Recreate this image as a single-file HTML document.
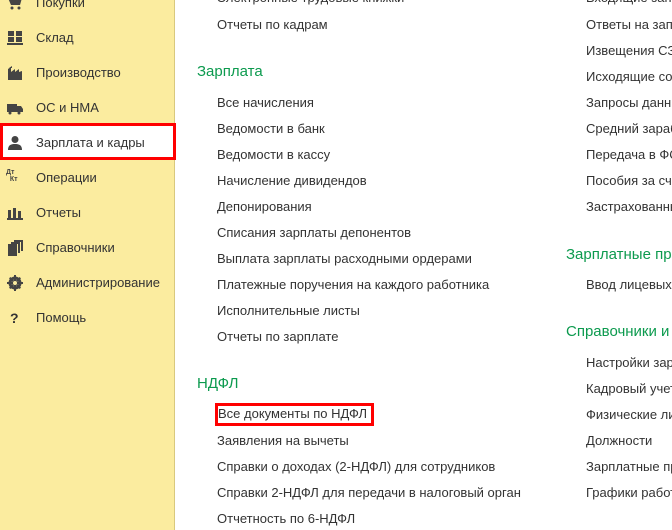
<!DOCTYPE html>
<html><head><meta charset="utf-8"><style>
html,body{margin:0;width:672px;height:530px;overflow:hidden}
body{background:#fff;font-family:"Liberation Sans",Arial,sans-serif;position:relative;color:#333}
.wrap{position:absolute;left:0;top:0;width:672px;height:530px;overflow:hidden}
.in{position:absolute;left:0;top:1px;width:672px;height:530px}
.sb{position:absolute;left:0;top:0;width:174px;height:530px;background:#FBEC9F;border-right:1px solid #D9C97E}
.it{position:absolute;left:36px;font-size:13px;color:#333;line-height:16px}
.ic{position:absolute;left:7px;width:16px;height:16px}
.l{position:absolute;font-size:13px;line-height:16px;color:#333;white-space:nowrap}
.h{position:absolute;font-size:15px;line-height:18px;color:#0C9A4E;white-space:nowrap}
.red{position:absolute;border:3px solid #f00;box-sizing:border-box}
</style></head><body><div class="wrap">
<div class="sb"></div>
<div class="in">
<svg class="ic" style="top:-6px" viewBox="0 0 16 16"><path d="M1 3h14l-2 7H4z" fill="#444"/><circle cx="5" cy="13" r="1.5" fill="#444"/><circle cx="12" cy="13" r="1.5" fill="#444"/></svg>
<div class="it" style="top:-6px">Покупки</div>
<svg class="ic" style="top:29px" viewBox="0 0 16 16"><path d="M1 1h6v5H1zM9 1h6v5H9zM1 7h6v5H1zM9 7h6v5H9zM0 13h16v2H0z" fill="#444"/></svg>
<div class="it" style="top:29px">Склад</div>
<svg class="ic" style="top:64px" viewBox="0 0 16 16"><path d="M1 15V4l3-2v5l4-3v3l4-3v3l3-1v9z M2 3l3-2v2z" fill="#444"/></svg>
<div class="it" style="top:64px">Производство</div>
<svg class="ic" style="top:99px" viewBox="0 0 16 16"><path d="M0 4h10v8H0zM10 6h4l2 3v3h-6z" fill="#444"/><circle cx="3" cy="13" r="1.5" fill="#444"/><circle cx="12" cy="13" r="1.5" fill="#444"/></svg>
<div class="it" style="top:99px">ОС и НМА</div>
<div style="position:absolute;left:0;top:122px;width:176px;height:37px;background:#fff"></div>
<div class="red" style="left:0;top:122px;width:176px;height:37px"></div>
<svg class="ic" style="top:134px" viewBox="0 0 16 16"><circle cx="8" cy="4.5" r="3.5" fill="#444"/><path d="M1 15c0-5 3-6 7-6s7 1 7 6z" fill="#444"/></svg>
<div class="it" style="top:134px">Зарплата и кадры</div>
<div style="position:absolute;left:6px;top:168px;font-size:7px;font-weight:bold;color:#444;line-height:7px">Дт<br>&nbsp;&nbsp;Кт</div>
<div class="it" style="top:169px">Операции</div>
<svg class="ic" style="top:204px" viewBox="0 0 16 16"><path d="M1 5h3v8H1zM6 3h3v10H6zM11 6h3v7h-3zM0 13h16v2H0z" fill="#444"/></svg>
<div class="it" style="top:204px">Отчеты</div>
<svg class="ic" style="top:239px" viewBox="0 0 16 16"><path d="M1 4h9v12H1zM4 2h9v11h-2V4H4zM7 0h9v11h-2V2H7z" fill="#444"/></svg>
<div class="it" style="top:239px">Справочники</div>
<svg class="ic" style="top:274px" viewBox="0 0 16 16"><circle cx="8" cy="8" r="5" fill="none" stroke="#444" stroke-width="3"/><path d="M7 0h2v16H7zM0 7h16v2H0z" fill="#444"/><path d="M2 3.4L3.4 2 14 12.6 12.6 14zM12.6 2L14 3.4 3.4 14 2 12.6z" fill="#444"/><circle cx="8" cy="8" r="2" fill="#FBEC9F"/></svg>
<div class="it" style="top:274px">Администрирование</div>
<div style="position:absolute;left:10px;top:309px;font-size:14px;font-weight:bold;color:#333">?</div>
<div class="it" style="top:309px">Помощь</div>

<div class="l" style="left:217px;top:-11px">Электронные трудовые книжки</div>
<div class="l" style="left:217px;top:16px">Отчеты по кадрам</div>
<div class="h" style="left:197px;top:62px">Зарплата</div>
<div class="l" style="left:217px;top:94px">Все начисления</div>
<div class="l" style="left:217px;top:120px">Ведомости в банк</div>
<div class="l" style="left:217px;top:146px">Ведомости в кассу</div>
<div class="l" style="left:217px;top:172px">Начисление дивидендов</div>
<div class="l" style="left:217px;top:198px">Депонирования</div>
<div class="l" style="left:217px;top:224px">Списания зарплаты депонентов</div>
<div class="l" style="left:217px;top:250px">Выплата зарплаты расходными ордерами</div>
<div class="l" style="left:217px;top:276px">Платежные поручения на каждого работника</div>
<div class="l" style="left:217px;top:302px">Исполнительные листы</div>
<div class="l" style="left:217px;top:328px">Отчеты по зарплате</div>
<div class="h" style="left:197px;top:374px">НДФЛ</div>
<div class="red" style="left:215px;top:402px;width:159px;height:23px"></div>
<div class="l" style="left:218px;top:405px">Все документы по НДФЛ</div>
<div class="l" style="left:217px;top:432px">Заявления на вычеты</div>
<div class="l" style="left:217px;top:458px">Справки о доходах (2-НДФЛ) для сотрудников</div>
<div class="l" style="left:217px;top:484px">Справки 2-НДФЛ для передачи в налоговый орган</div>
<div class="l" style="left:217px;top:510px">Отчетность по 6-НДФЛ</div>

<div class="l" style="left:586px;top:-11px">Входящие запросы</div>
<div class="l" style="left:586px;top:16px">Ответы на запросы</div>
<div class="l" style="left:586px;top:42px">Извещения СЗВ</div>
<div class="l" style="left:586px;top:68px">Исходящие сообщения</div>
<div class="l" style="left:586px;top:94px">Запросы данных</div>
<div class="l" style="left:586px;top:120px">Средний заработок</div>
<div class="l" style="left:586px;top:146px">Передача в ФСС</div>
<div class="l" style="left:586px;top:172px">Пособия за счет</div>
<div class="l" style="left:586px;top:198px">Застрахованные</div>
<div class="h" style="left:566px;top:245px">Зарплатные проекты</div>
<div class="l" style="left:586px;top:276px">Ввод лицевых счетов</div>
<div class="h" style="left:566px;top:322px">Справочники и настройки</div>
<div class="l" style="left:586px;top:354px">Настройки зарплаты</div>
<div class="l" style="left:586px;top:380px">Кадровый учет</div>
<div class="l" style="left:586px;top:406px">Физические лица</div>
<div class="l" style="left:586px;top:432px">Должности</div>
<div class="l" style="left:586px;top:458px">Зарплатные проекты</div>
<div class="l" style="left:586px;top:484px">Графики работы</div>
</div></div>
</body></html>
